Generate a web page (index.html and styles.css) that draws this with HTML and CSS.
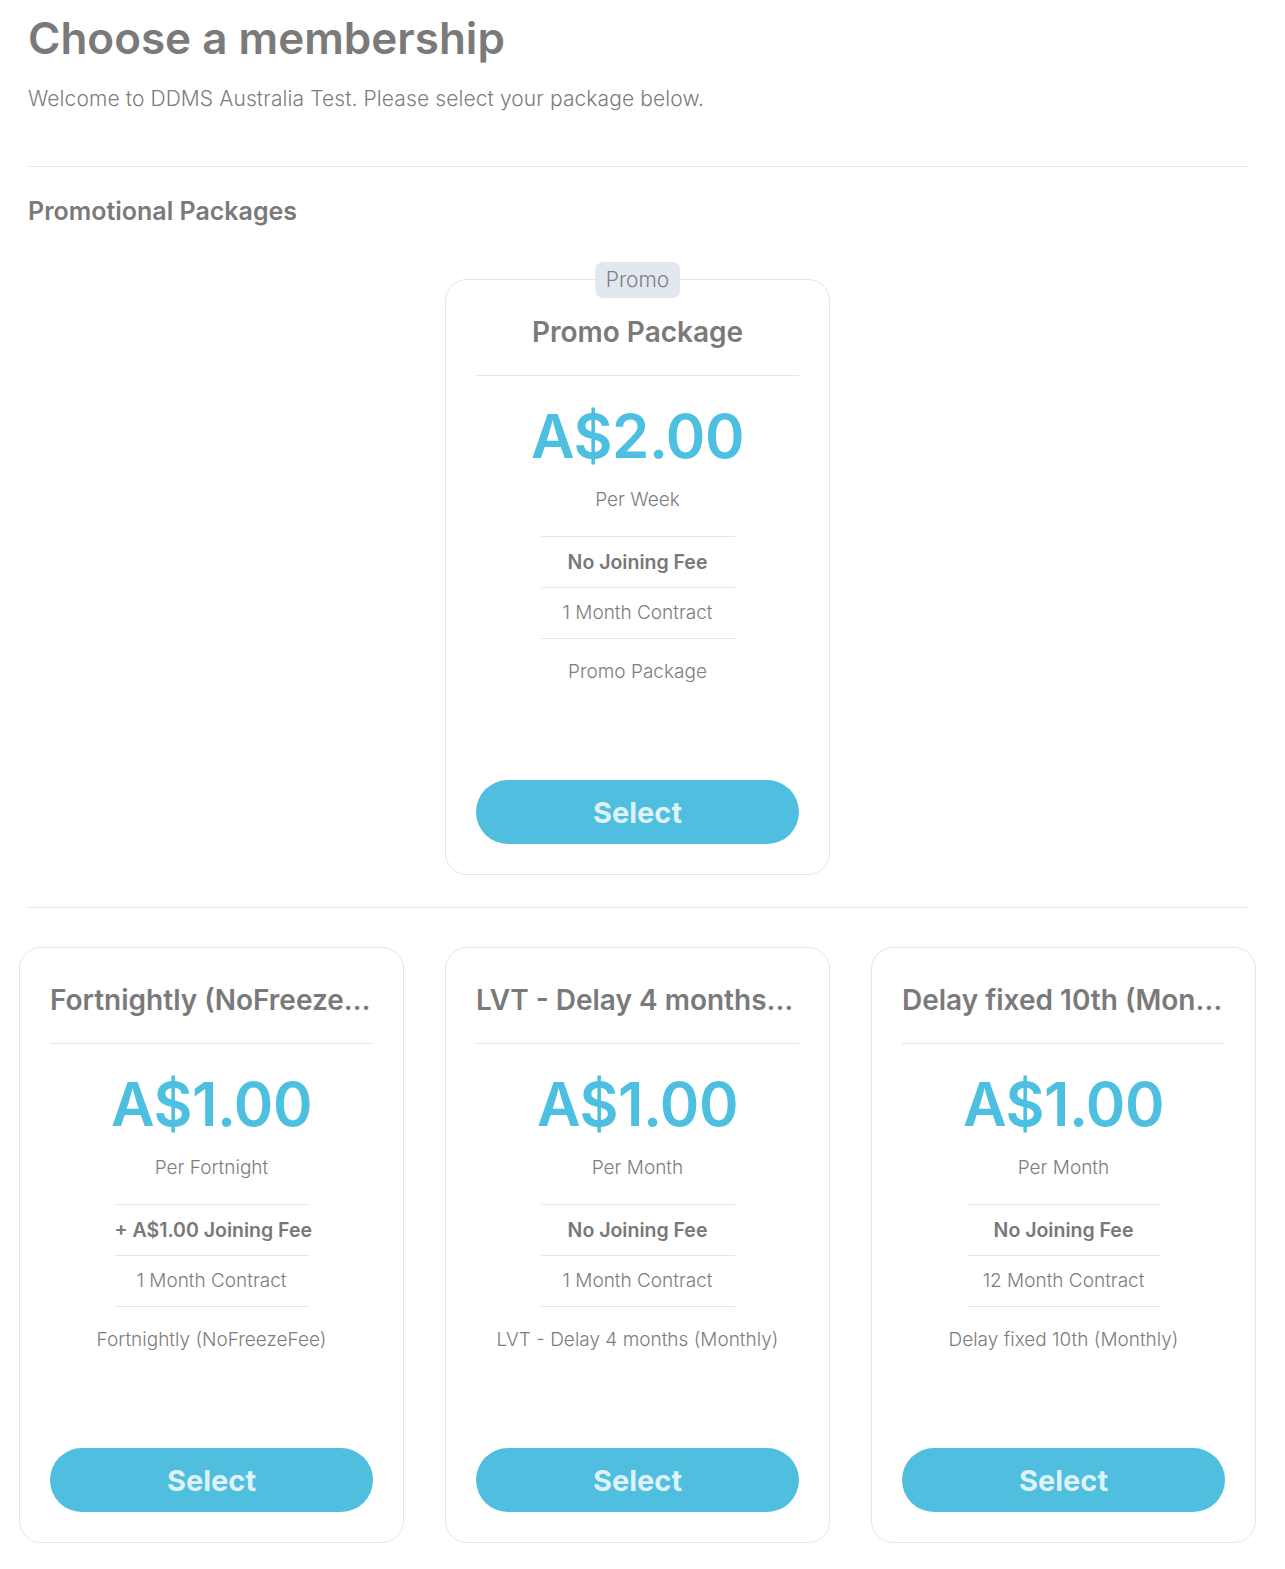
FILE: index.html
```html
<!DOCTYPE html>
<html lang="en">
<head>
<meta charset="utf-8">
<title>Choose a membership</title>
<link rel="stylesheet" href="styles.css">
</head>
<body>
<main class="page">
  <h1 class="title">Choose a membership</h1>
  <p class="intro">Welcome to DDMS Australia Test. Please select your package below.</p>
  <hr class="rule rule-top">
  <h2 class="section-title">Promotional Packages</h2>

  <div class="row row-center">
    <div class="card">
      <span class="badge">Promo</span>
      <h3 class="card-title">Promo Package</h3>
      <div class="price">A$2.00</div>
      <div class="period">Per Week</div>
      <ul class="facts">
        <li class="fee">No Joining Fee</li>
        <li>1 Month Contract</li>
      </ul>
      <p class="desc">Promo Package</p>
      <button class="select">Select</button>
    </div>
  </div>

  <hr class="rule rule-mid">

  <div class="row">
    <div class="card">
      <h3 class="card-title">Fortnightly (NoFreezeFee)</h3>
      <div class="price">A$1.00</div>
      <div class="period">Per Fortnight</div>
      <ul class="facts">
        <li class="fee">+ A$1.00 Joining Fee</li>
        <li>1 Month Contract</li>
      </ul>
      <p class="desc">Fortnightly (NoFreezeFee)</p>
      <button class="select">Select</button>
    </div>
    <div class="card">
      <h3 class="card-title">LVT - Delay 4 months (Monthly)</h3>
      <div class="price">A$1.00</div>
      <div class="period">Per Month</div>
      <ul class="facts">
        <li class="fee">No Joining Fee</li>
        <li>1 Month Contract</li>
      </ul>
      <p class="desc">LVT - Delay 4 months (Monthly)</p>
      <button class="select">Select</button>
    </div>
    <div class="card">
      <h3 class="card-title">Delay fixed 10th (Monthly)</h3>
      <div class="price">A$1.00</div>
      <div class="period">Per Month</div>
      <ul class="facts">
        <li class="fee">No Joining Fee</li>
        <li>12 Month Contract</li>
      </ul>
      <p class="desc">Delay fixed 10th (Monthly)</p>
      <button class="select">Select</button>
    </div>
  </div>
</main>
</body>
</html>
```

FILE: styles.css
```css
* { box-sizing: border-box; }

html, body {
  margin: 0;
  padding: 0;
  background: #ffffff;
}

body {
  font-family: "Inter", "Noto Sans", "Liberation Sans", sans-serif;
  color: #7b7b7b;
}

.page {
  padding: 0 38px 0 28px;
}

.title {
  margin: 12px 0 0;
  font-size: 44px;
  line-height: 52px;
  font-weight: 600;
  color: #7a7a7a;
  letter-spacing: 0;
}

.intro {
  margin: 21px 0 0;
  font-size: 21px;
  line-height: 28px;
  font-weight: 300;
  color: #7d7d7d;
  letter-spacing: 0.1px;
}

.rule {
  border: 0;
  border-top: 1px solid #e6e6e6;
  margin: 0;
}

.rule-top { margin-top: 53px; }

.section-title {
  margin: 29px 0 0;
  font-size: 25px;
  line-height: 30px;
  font-weight: 600;
  color: #7a7a7a;
}

.row {
  display: flex;
  gap: 41px;
  margin: 39px -9px 0;
}

.row-center {
  justify-content: center;
  margin-top: 53px;
}

.rule-mid { margin-top: 32px; }

.card {
  position: relative;
  width: 385px;
  height: 596px;
  flex: 0 0 385px;
  border: 1px solid #e6e6e6;
  border-radius: 22px;
  padding: 30px 30px 30px;
  display: flex;
  flex-direction: column;
  align-items: center;
  background: #fff;
}

.badge {
  position: absolute;
  top: -18px;
  left: 50%;
  transform: translateX(-50%);
  background: #e2e8f0;
  color: #808080;
  font-size: 21px;
  font-weight: 300;
  line-height: 36px;
  padding: 0 11px;
  border-radius: 8px;
}

.card-title {
  width: 100%;
  margin: 4px 0 0;
  padding-bottom: 25px;
  border-bottom: 1px solid #e6e6e6;
  text-align: center;
  font-size: 28px;
  line-height: 36px;
  font-weight: 600;
  color: #7a7a7a;
  white-space: nowrap;
  overflow: hidden;
  text-overflow: ellipsis;
}

.price {
  margin-top: 23px;
  font-size: 60px;
  line-height: 74px;
  font-weight: 600;
  color: #4dbfe0;
  letter-spacing: -0.5px;
}

.period {
  margin-top: 13px;
  font-size: 19px;
  line-height: 28px;
  font-weight: 300;
  color: #7d7d7d;
  padding-bottom: 22px;
}

.facts {
  list-style: none;
  margin: 0;
  padding: 0;
  width: 194px;
}

.facts li {
  border-top: 1px solid #e6e6e6;
  padding: 11px 0;
  line-height: 28px;
  font-size: 19px;
  font-weight: 300;
  text-align: center;
  white-space: nowrap;
  color: #7d7d7d;
}

.facts li:last-child {
  border-bottom: 1px solid #e6e6e6;
}

.facts .fee {
  font-weight: 600;
  font-size: 19.5px;
  color: #787878;
}

.desc {
  margin: 19px 0 0;
  font-size: 19px;
  line-height: 28px;
  font-weight: 300;
  color: #7d7d7d;
  text-align: center;
}

.select {
  margin-top: auto;
  width: 100%;
  height: 64px;
  border: 0;
  border-radius: 32px;
  background: #50bedf;
  color: #def2f9;
  font-family: inherit;
  font-size: 29px;
  font-weight: 700;
  cursor: pointer;
}
```
